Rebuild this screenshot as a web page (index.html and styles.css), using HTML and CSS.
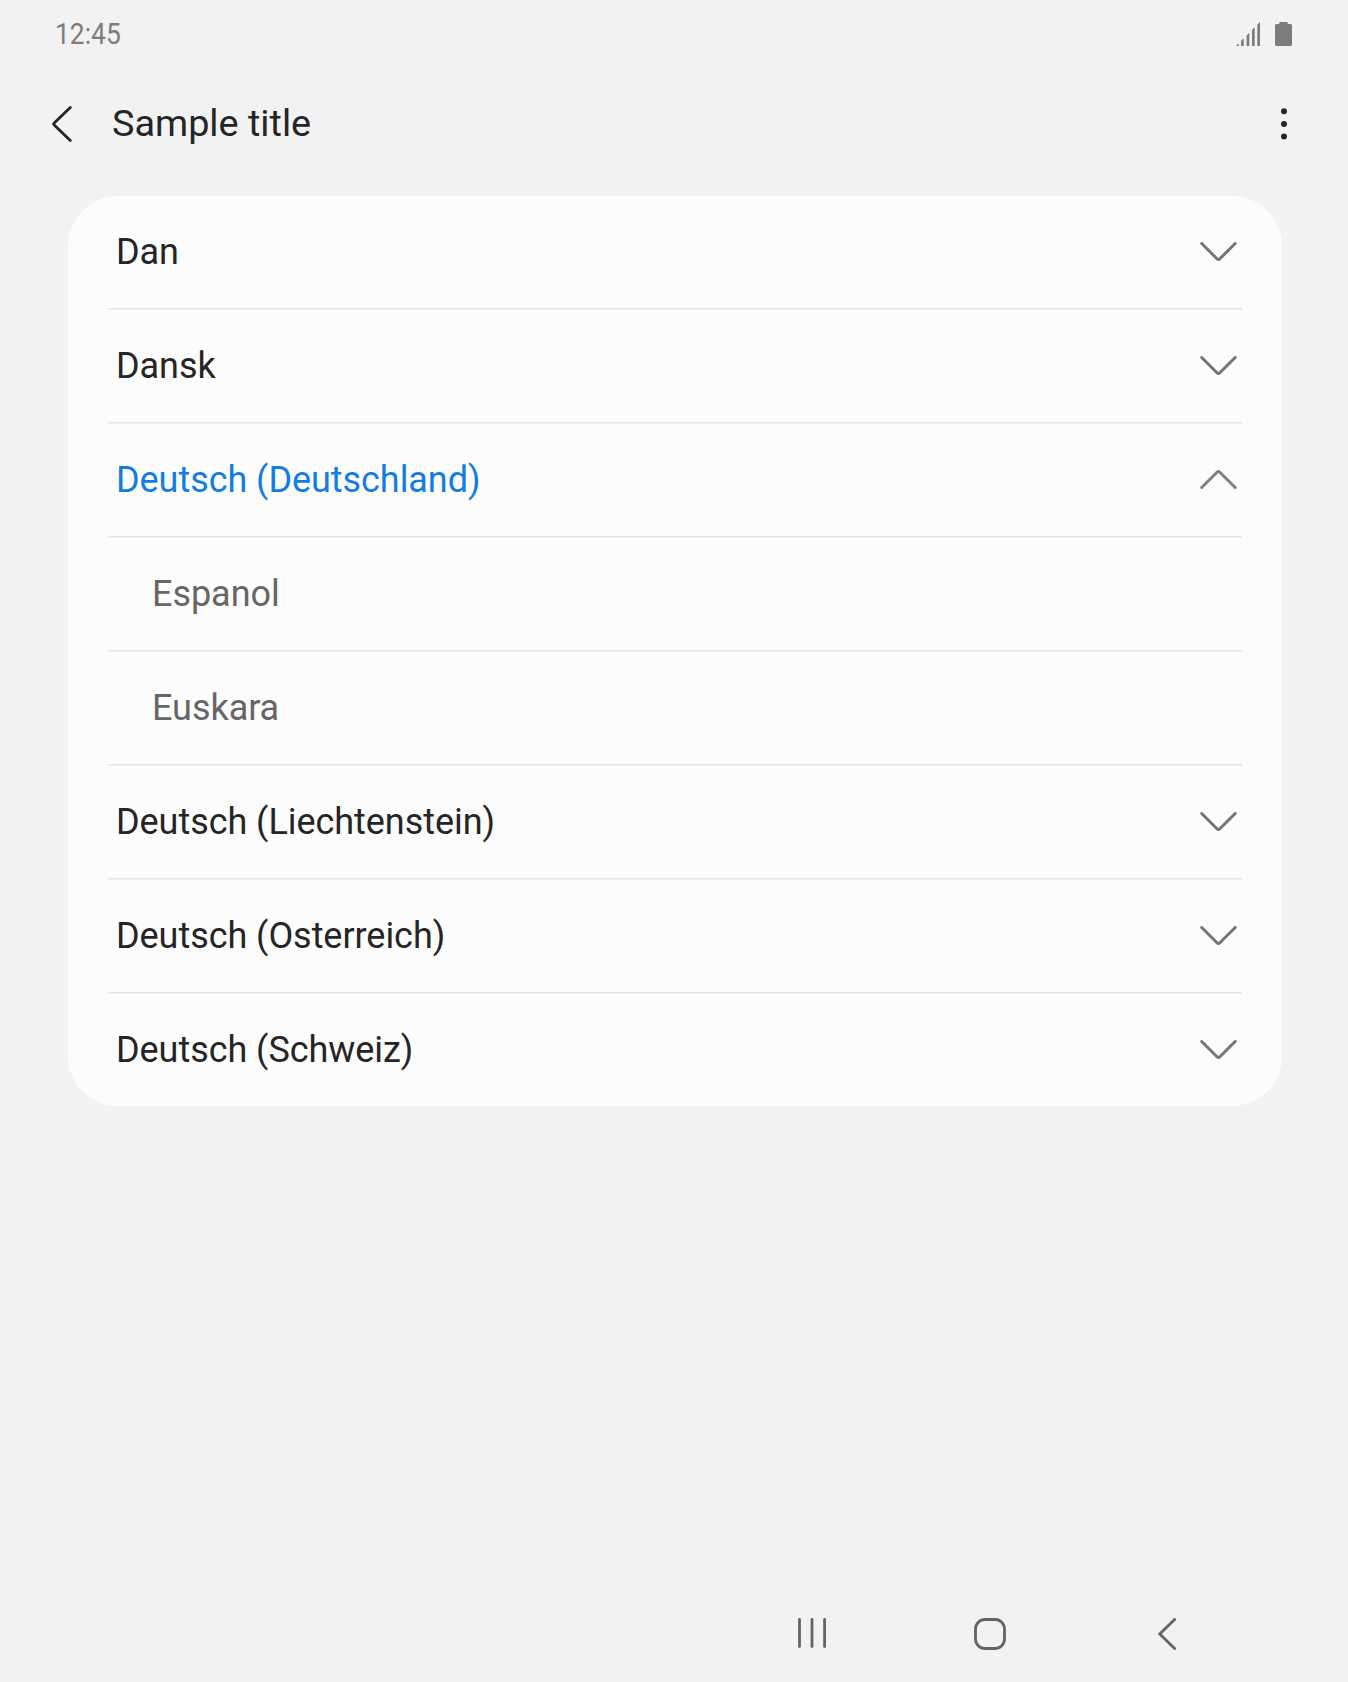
FILE: index.html
```html
<!DOCTYPE html>
<html lang="en">
<head>
<meta charset="utf-8">
<title>Sample title</title>
<link rel="stylesheet" href="styles.css">
</head>
<body>
<svg class="defs" aria-hidden="true">
  <symbol id="chevron" viewBox="0 0 38 20"><path d="M1.7 1.5L17.2 17Q18.4 18.2 19.6 17L35.2 1.5"/></symbol>
</svg>
<div class="screen">
  <div class="status">
    <span class="clock">12:45</span>
    <div class="status-icons">
      <svg class="signal" viewBox="0 0 24 24"><path d="M0 24L2.7 21.3V24ZM5 24V19L7.7 16.2V24ZM10.6 24V13.4L13.3 10.7V24ZM16 24V8L18.7 5.3V24ZM21.3 24V2.7L24 0V24Z"/></svg>
      <svg class="battery" viewBox="0 0 17 24"><path d="M4.2 2V1.2Q4.2 0 5.4 0H11.6Q12.8 0 12.8 1.2V2H15.4Q17 2 17 3.6V22.4Q17 24 15.4 24H1.6Q0 24 0 22.4V3.6Q0 2 1.6 2Z"/></svg>
    </div>
  </div>
  <header class="appbar">
    <svg class="back" viewBox="0 0 20 36"><path d="M18.3 1.4L2.2 16.9Q1.1 18 2.2 19.1L18.3 34.6"/></svg>
    <h1 class="title">Sample title</h1>
    <svg class="more" viewBox="0 0 6 32"><circle cx="3" cy="3.3" r="3"/><circle cx="3" cy="16" r="3"/><circle cx="3" cy="28.4" r="3"/></svg>
  </header>
  <main class="card">
    <div class="row"><span class="label">Dan</span><svg class="chevron"><use href="#chevron"/></svg></div>
    <div class="row"><span class="label">Dansk</span><svg class="chevron"><use href="#chevron"/></svg></div>
    <div class="row"><span class="label selected">Deutsch (Deutschland)</span><svg class="chevron open"><use href="#chevron"/></svg></div>
    <div class="row"><span class="label child">Espanol</span></div>
    <div class="row"><span class="label child">Euskara</span></div>
    <div class="row"><span class="label">Deutsch (Liechtenstein)</span><svg class="chevron"><use href="#chevron"/></svg></div>
    <div class="row"><span class="label">Deutsch (Osterreich)</span><svg class="chevron"><use href="#chevron"/></svg></div>
    <div class="row"><span class="label">Deutsch (Schweiz)</span><svg class="chevron"><use href="#chevron"/></svg></div>
  </main>
  <nav class="navbar">
    <svg class="recents" viewBox="0 0 30 30"><path d="M1.5 1.4V28.6M14 1.4V28.6M26.6 1.4V28.6"/></svg>
    <svg class="home" viewBox="0 0 32 32"><rect x="1.5" y="1.5" width="29" height="29" rx="9.5"/></svg>
    <svg class="nav-back" viewBox="0 0 18 32"><path d="M16.6 1.4L1.8 16L16.6 30.6"/></svg>
  </nav>
</div>
</body>
</html>
```
FILE: styles.css
```css
* { box-sizing: border-box; }
body { margin: 0; background: #f2f2f2; font-family: Roboto, sans-serif; color: #252525; }
svg { display: block; flex: none; }
.defs { display: none; }
.screen { width: 1348px; height: 1682px; display: flex; flex-direction: column; }
.status { height: 68px; padding: 0 56px 0 55px; display: flex; align-items: center; justify-content: space-between; }
.clock { font-size: 30px; line-height: 68px; color: #7c7c7c; transform: scaleX(.88); transform-origin: left; }
.status-icons { display: flex; gap: 15px; fill: #7c7c7c; }
.signal { width: 24px; height: 24px; }
.battery { width: 17px; height: 24px; }
.appbar { height: 128px; padding: 0 61px 16px 52px; display: flex; align-items: center; }
.back { width: 20px; height: 36px; fill: none; stroke: #252525; stroke-width: 2.8; stroke-linecap: round; }
.title { margin: -2px auto 0 40px; font-size: 37.8px; font-weight: 400; line-height: 44px; }
.more { width: 6px; height: 32px; fill: #252525; }
.card { margin: 0 66px 0 68px; background: #fcfcfc; border-radius: 50px; padding: 0 40px; }
.row { height: 114px; border-bottom: 1px solid #efefef; box-shadow: inset 0 -1px #e5e5e5; padding: 0 4px 1px 8px; display: flex; align-items: center; justify-content: space-between; }
.row:last-child { height: 112px; border-bottom: 0; box-shadow: none; padding-bottom: 0; }
.label { font-size: 36px; line-height: 42px; letter-spacing: -.05px; }
.selected { color: #147de3; }
.child { padding-left: 36px; color: #666; }
.chevron { width: 38px; height: 20px; fill: none; stroke: #757575; stroke-width: 3; stroke-linecap: round; }
.open { transform: translateY(-1px) scaleY(-1); stroke: #808080; }
.navbar { margin-top: auto; height: 96px; padding: 32px 172px 0 798px; display: flex; align-items: flex-start; fill: none; stroke: #646464; stroke-width: 2.8; stroke-linecap: round; }
.recents { width: 30px; height: 30px; }
.home { width: 32px; height: 32px; margin: 0 152px 0 146px; }
.nav-back { width: 18px; height: 32px; }
```
